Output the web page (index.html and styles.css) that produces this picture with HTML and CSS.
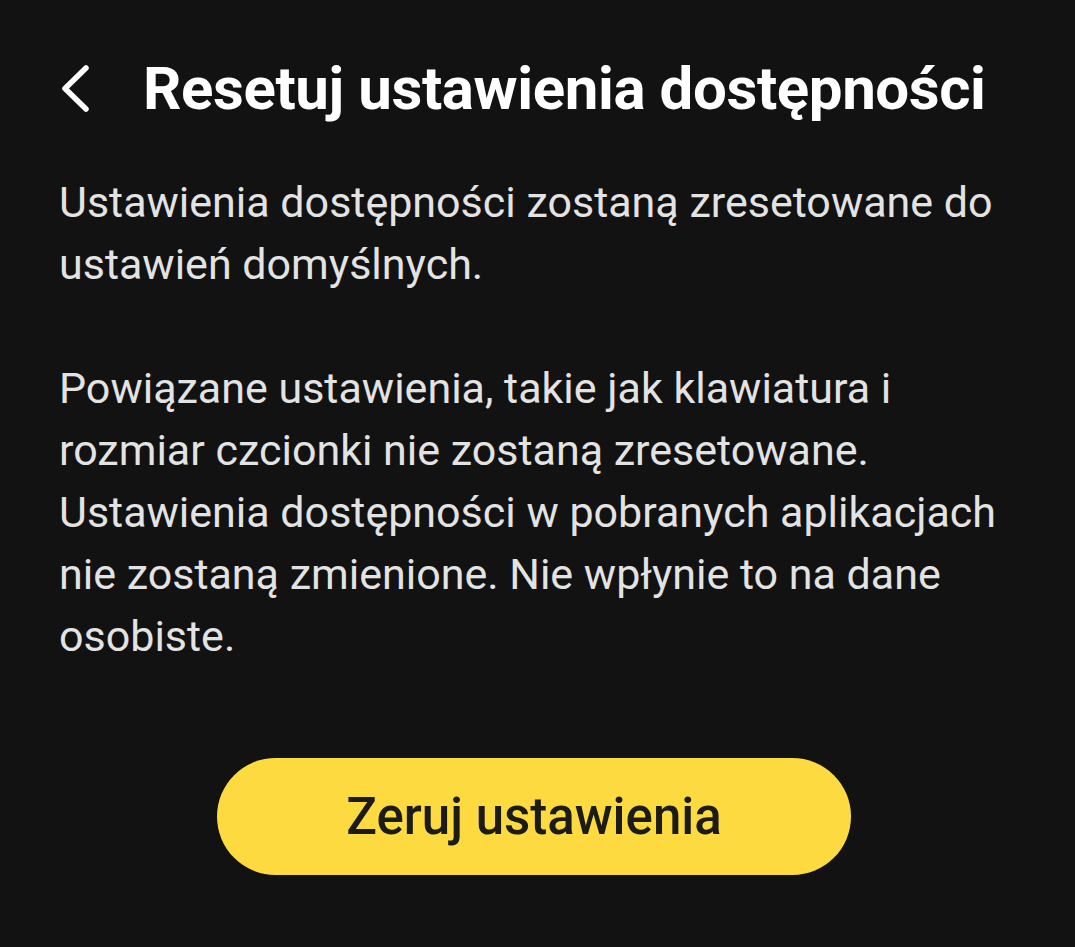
FILE: index.html
```html
<!DOCTYPE html>
<html lang="pl">
<head>
<meta charset="utf-8">
<link rel="stylesheet" href="styles.css">
</head>
<body>
<div class="screen">
  <header class="header">
    <button class="back" aria-label="Wstecz">
      <svg width="40" height="56" viewBox="0 0 40 56">
        <path d="M27 8 L6 28.5 L27 49" fill="none" stroke="#fff" stroke-width="5.5" stroke-linecap="round" stroke-linejoin="round"/>
      </svg>
    </button>
    <h1 class="title">Resetuj ustawienia dostępności</h1>
  </header>
  <div class="content">
    <p class="para">Ustawienia dostępności zostaną zresetowane do ustawień domyślnych.</p>
    <p class="para">Powiązane ustawienia, takie jak klawiatura i rozmiar czcionki nie zostaną zresetowane. Ustawienia dostępności w pobranych aplikacjach nie zostaną zmienione. Nie wpłynie to na dane osobiste.</p>
  </div>
  <div class="actions">
    <button class="reset">Zeruj ustawienia</button>
  </div>
</div>
</body>
</html>
```

FILE: styles.css
```css
html, body {
  margin: 0;
  padding: 0;
  background: #121212;
  height: 100%;
}
.screen {
  font-family: Roboto, "Noto Sans", sans-serif;
  color: #e3e3e3;
  padding: 0 0 0 59px;
}
.header {
  display: flex;
  align-items: center;
  height: 100px;
  padding-top: 38px;
}
.back {
  background: none;
  border: 0;
  padding: 0;
  margin: 0;
  width: 84px;
  display: flex;
  align-items: center;
  cursor: pointer;
}
.title {
  margin: 0;
  font-size: 60px;
  font-weight: 700;
  color: #ffffff;
  letter-spacing: -0.4px;
  white-space: nowrap;
}
.content {
  padding-top: 33px;
  width: 960px;
}
.para {
  margin: 0 0 62px 0;
  font-size: 43px;
  line-height: 62px;
  font-weight: 400;
}
.para:last-child {
  margin-bottom: 0;
}
.actions {
  display: flex;
  padding-top: 91px;
  padding-left: 158px;
}
.reset {
  width: 634px;
  height: 117px;
  border: 0;
  border-radius: 59px;
  background: #fddb40;
  color: #1b1b17;
  font-family: Roboto, "Noto Sans", sans-serif;
  font-size: 51px;
  font-weight: 500;
  cursor: pointer;
}
```
